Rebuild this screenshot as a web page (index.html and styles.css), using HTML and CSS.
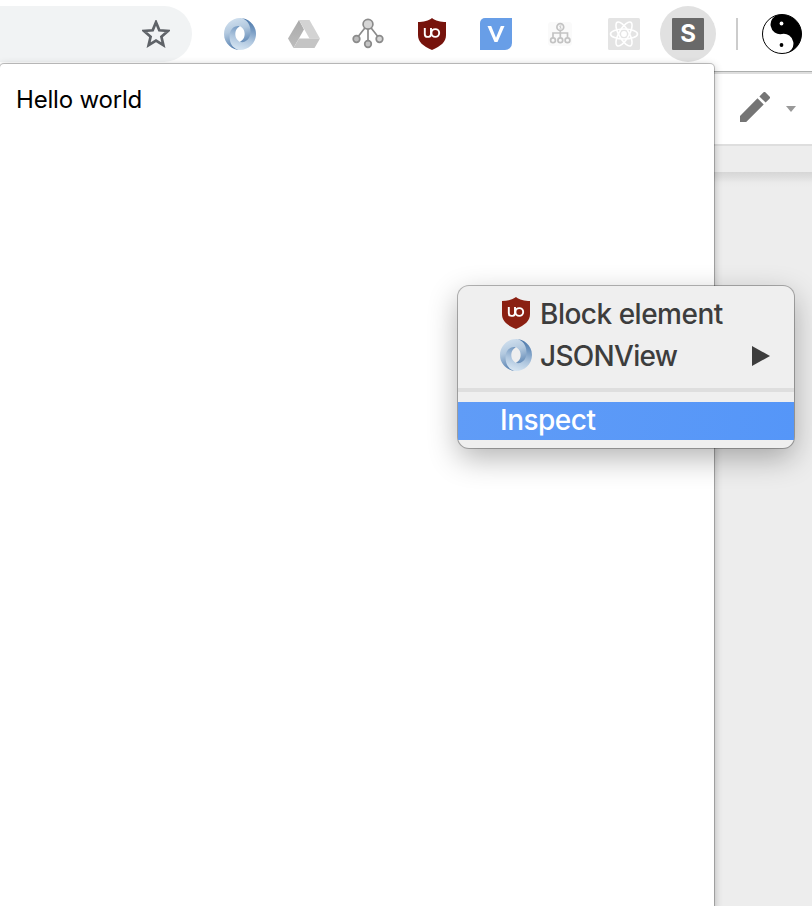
FILE: index.html
```html
<!DOCTYPE html>
<html lang="en">
<head>
<meta charset="utf-8">
<title>Extension popup</title>
<link rel="stylesheet" href="styles.css">
</head>
<body>
<svg class="defs" aria-hidden="true">
  <defs>
    <linearGradient id="swirlA" x1="0.2" y1="0" x2="0.5" y2="1">
      <stop offset="0" stop-color="#d3e2f0"/><stop offset="0.4" stop-color="#b3c9df"/><stop offset="0.75" stop-color="#7397bf"/><stop offset="1" stop-color="#4d78aa"/>
    </linearGradient>
    <linearGradient id="swirlB" x1="0.65" y1="0" x2="0.4" y2="1">
      <stop offset="0" stop-color="#4a76a8"/><stop offset="0.3" stop-color="#7398c1"/><stop offset="0.65" stop-color="#adc5de"/><stop offset="1" stop-color="#d6e5f2"/>
    </linearGradient>
    <linearGradient id="driveL" x1="0" y1="0" x2="0" y2="1"><stop offset="0" stop-color="#aaa"/><stop offset="1" stop-color="#bdbdbd"/></linearGradient>
    <symbol id="jsonview" viewBox="0 0 160 160">
      <path fill="url(#swirlA)" d="M79.865 119.1c35.397 48.255 70.04-13.469 69.988-50.587-.06-43.886-44.54-68.414-70.018-68.414C38.943.1 0 33.895 0 80.135 0 131.531 44.64 160 79.835 160c-7.965-1.147-34.507-6.834-34.863-67.967-.24-41.347 13.487-57.865 34.805-50.599.477.177 23.514 9.265 23.514 38.95 0 29.56-23.427 38.716-23.427 38.716z"/>
      <path fill="url(#swirlB)" d="M79.823 41.4C56.433 33.34 27.78 52.618 27.78 91.23c0 63.048 46.72 68.77 52.384 68.77C121.057 160 160 126.204 160 79.964 160 28.568 115.36.1 80.165.1c9.748-1.35 52.541 10.55 52.541 69.037 0 38.141-31.953 58.905-52.735 50.033-.477-.177-23.514-9.265-23.514-38.95 0-29.56 23.367-38.818 23.366-38.82z"/>
    </symbol>
    <symbol id="ublock" viewBox="0 0 32 32">
      <path fill="currentColor" d="M16 0C13 2.600 7 4 2 4v13c0 7 5 11 14 15 9-4 14-8 14-15V4C25 4 19 2.600 16 0z"/>
      <path fill="none" stroke="#fff" stroke-width="1.900" d="M8.800 10v6.200a2.700 2.700 0 0 0 2.700 2.700h1.200a2.700 2.700 0 0 0 2.300-2.500V10"/>
      <circle cx="19.300" cy="15" r="3.900" fill="none" stroke="#fff" stroke-width="1.900"/>
    </symbol>
  </defs>
</svg>
<header class="toolbar">
  <div class="omnibox">
    <svg class="star" viewBox="0 0 28 28"><path d="M14 2.200l3.300 8.100 8.700.700-6.600 5.700 2 8.500-7.400-4.500-7.400 4.500 2-8.500L2 11l8.700-.700z"/></svg>
  </div>
  <nav class="extensions">
    <div class="slot"><svg class="icon"><use href="#jsonview"/></svg></div>
    <div class="slot">
      <svg class="icon" viewBox="0 0 32 32">
        <path fill="url(#driveL)" d="M11 2L0 20.500 5.500 30 16 11.500z"/>
        <path fill="#d3d3d3" d="M11 2h10.500L32 20.500H21.500z"/>
        <path fill="#c4c4c4" d="M11 20.500h21L26.500 30h-21z"/>
      </svg>
    </div>
    <div class="slot">
      <svg class="icon" viewBox="0 0 32 32">
        <g stroke="#8b8b8b" stroke-width="1.700">
          <path fill="none" d="M16 6v18M16 6L5 20M16 6l11 14"/>
          <circle cx="16" cy="6.200" r="4.900" fill="#d6d6d6"/>
          <circle cx="4.500" cy="21" r="3.300" fill="#bcbcbc"/>
          <circle cx="16" cy="26" r="3.300" fill="#c4c4c4"/>
          <circle cx="27.500" cy="21" r="3.300" fill="#d6d6d6"/>
        </g>
      </svg>
    </div>
    <div class="slot"><svg class="icon shield"><use href="#ublock"/></svg></div>
    <div class="slot"><svg class="icon" viewBox="0 0 32 32"><path fill="#689ee7" d="M5 0h27v25a7 7 0 0 1-7 7H0V5a5 5 0 0 1 5-5z"/><path fill="#fff" d="M7.500 8h3.700L16 19.800 20.800 8h3.700l-7 16h-3z"/></svg></div>
    <div class="slot">
      <svg class="icon" viewBox="0 0 32 32">
        <rect x="4" y="4" width="24" height="24" rx="3" fill="#fafafa"/>
        <g fill="none" stroke="#c3c3c3" stroke-width="1.700">
          <circle cx="16.300" cy="9" r="3.400"/><path d="M15 7.500l2.500 3M17 7l-1 4" stroke-width=".8"/>
          <path d="M16.300 12.500V20M9 20v-5h14.500v5"/>
          <circle cx="9" cy="22.300" r="2.400"/><circle cx="16.300" cy="22.300" r="2.400"/><circle cx="23.500" cy="22.300" r="2.400"/>
        </g>
      </svg>
    </div>
    <div class="slot">
      <svg class="icon" viewBox="0 0 32 32">
        <rect width="32" height="32" rx="1.500" fill="#e4e4e4"/>
        <g fill="none" stroke="#fff" stroke-width="1.600">
          <ellipse cx="16" cy="16" rx="13.500" ry="5"/>
          <ellipse cx="16" cy="16" rx="13.500" ry="5" transform="rotate(60 16 16)"/>
          <ellipse cx="16" cy="16" rx="13.500" ry="5" transform="rotate(120 16 16)"/>
        </g>
        <circle cx="16" cy="16" r="2.900" fill="#fff"/>
      </svg>
    </div>
    <div class="slot"><div class="active"><span class="letter">S</span></div></div>
  </nav>
  <div class="divider"></div>
  <svg class="avatar" viewBox="0 0 40 40">
    <circle cx="20" cy="20" r="19.500" fill="#fff" stroke="#000" stroke-width="1"/>
    <g transform="rotate(-10 20 20)"><path d="M20 .5a9.750 9.750 0 0 0 0 19.500 9.750 9.750 0 0 1 0 19.500 19.500 19.500 0 0 0 0-39z"/></g>
    <circle cx="19.500" cy="9.500" r="1.900" fill="#fff"/><circle cx="19.500" cy="31" r="1.900"/>
  </svg>
</header>
<main class="page">
  <div class="docbar">
    <svg class="pencil" viewBox="0 0 30 30"><path d="M0 24v6h6.200L23.700 12.500 17.500 6.300zM29.500 6.700a1.600 1.600 0 0 0 0-2.300L25.600.500a1.600 1.600 0 0 0-2.300 0l-3.900 3.900 6.200 6.200z"/></svg>
    <svg class="caret" viewBox="0 0 10 6"><path d="M0 0h10L5 6z"/></svg>
  </div>
  <div class="ruler"></div>
  <div class="canvas"></div>
</main>
<section class="popup">Hello world</section>
<div class="menu">
  <div class="item"><svg class="icon shield"><use href="#ublock"/></svg><span class="block">Block element</span></div>
  <div class="item"><svg class="icon"><use href="#jsonview"/></svg><span class="json">JSONView</span><svg class="arrow" viewBox="0 0 18 20"><path d="M0 0l18 10L0 20z"/></svg></div>
  <div class="separator"></div>
  <div class="item selected"><span class="inspect">Inspect</span></div>
</div>
</body>
</html>
```
FILE: styles.css
```css
* { box-sizing: border-box; }
body {
  margin: 0;
  width: 812px;
  height: 906px;
  overflow: hidden;
  position: relative;
  display: flex;
  flex-direction: column;
  background: #ededed;
  font-family: Inter, "Liberation Sans", sans-serif;
}
svg { display: block; flex: none; }
.defs { position: absolute; width: 0; height: 0; }
.icon { width: 32px; height: 32px; }
.toolbar {
  display: flex;
  align-items: center;
  height: 74px;
  padding-bottom: 4px;
  background: #fff;
  border-bottom: 2px solid #dedede;
  box-shadow: inset 0 -1px #adafae;
  flex: none;
}
.omnibox {
  width: 192px;
  height: 56px;
  margin-right: 16px;
  padding-right: 22px;
  border-radius: 0 28px 28px 0;
  background: #f1f3f4;
  display: flex;
  align-items: center;
  justify-content: flex-end;
}
.star { width: 28px; height: 28px; fill: none; stroke: #5f6368; stroke-width: 2.7; }
.extensions { display: flex; }
.slot { width: 64px; height: 56px; display: flex; align-items: center; justify-content: center; }
.toolbar .shield { color: #76130c; }
.active {
  width: 56px;
  height: 56px;
  border-radius: 50%;
  background: #e1e1e1;
  display: flex;
  align-items: center;
  justify-content: center;
}
.letter {
  width: 32px;
  height: 32px;
  border-radius: 1px;
  background: #696969;
  color: #fff;
  font: 700 24px/32px Inter, sans-serif;
  text-align: center;
}
.divider { width: 2px; height: 32px; margin: 0 24px 0 16px; background: #ccc; }
.avatar { width: 40px; height: 40px; }
.page { flex: 1; display: flex; flex-direction: column; }
.docbar {
  height: 72px;
  padding: 18px 16px 0 0;
  background: #fff;
  border-bottom: 2px solid #dedede;
  display: flex;
  justify-content: flex-end;
}
.pencil { width: 30px; height: 30px; fill: #757575; }
.caret { width: 10px; height: 6px; margin: 14px 0 0 16px; fill: #999; }
.ruler { height: 26px; background: #ededed; }
.canvas { flex: 1; background: linear-gradient(#d6d6d6, #dedede 5px, #ebebeb 11px, #ededed 15px) no-repeat; background-size: 100% 15px; }
.popup {
  position: absolute;
  left: 0;
  top: 64px;
  width: 714px;
  height: 846px;
  padding: 20px 16px;
  background: #fff;
  border-radius: 4px 4px 0 0;
  box-shadow: 0 0 0 1px rgba(0,0,0,.22), 0 2px 8px rgba(0,0,0,.3);
  color: #000;
  font-size: 24px;
  line-height: 32px;
  letter-spacing: -.18px;
}
.menu {
  position: absolute;
  left: 458px;
  top: 286px;
  width: 336px;
  height: 162px;
  padding-top: 6px;
  border-radius: 11px;
  background: #efefef;
  box-shadow: 0 0 0 1px rgba(0,0,0,.28), 0 10px 30px rgba(0,0,0,.3);
  color: #3d3d3d;
  font-size: 28px;
  font-weight: 450;
}
.item { display: flex; align-items: center; height: 42px; padding: 0 24px 0 42px; }
.item .icon { margin-right: 8px; }
.item .shield { color: #8b2012; }
.arrow { width: 18px; height: 20px; margin: 2px 0 0 auto; fill: #3d3d3d; }
.separator { height: 4px; margin: 12px 0 10px; background: #dedede; }
.selected { height: 38px; padding-bottom: 2px; color: #fff; background: linear-gradient(100deg, #609cf7, #5596f8); }
.block, .json, .inspect { white-space: nowrap; letter-spacing: -.5px; padding-top: 1px; }
.json { letter-spacing: -.7px; }
.inspect { padding-top: 0; }
```
